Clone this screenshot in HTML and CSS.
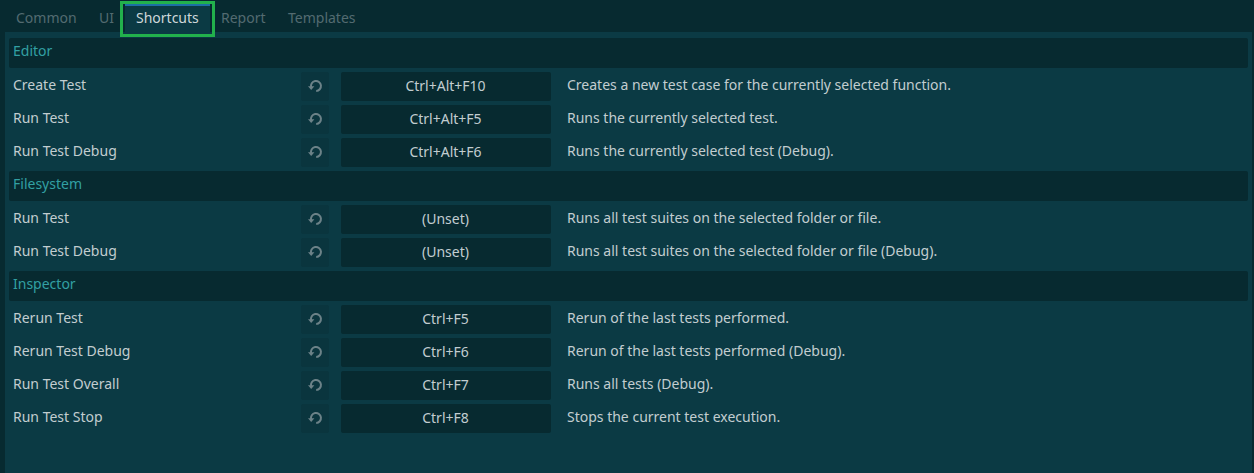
FILE: index.html
```
<!DOCTYPE html>
<html lang="en">
<head>
<meta charset="utf-8">
<title>Shortcuts</title>
<link rel="stylesheet" href="styles.css">
</head>
<body>
<svg class="defs" width="0" height="0"><symbol id="reset" viewBox="0 0 16 16"><path d="M3.1 9.2A5 5 0 1 1 8.2 13" fill="none" stroke="currentColor" stroke-width="2"/><path d="M0 8.2h6.4L3.2 12z" fill="currentColor"/></symbol></svg>
<nav class="tabs">
  <span class="tab common">Common</span><span class="tab ui">UI</span><span class="tab active">Shortcuts<i class="marker"></i></span><span class="tab report">Report</span><span class="tab">Templates</span>
</nav>
<main class="panel">
  <h2 class="section">Editor</h2>
  <div class="row"><span class="name">Create Test</span><span class="reset"><svg><use href="#reset"/></svg></span><span class="key">Ctrl+Alt+F10</span><span class="desc">Creates a new test case for the currently selected function.</span></div>
  <div class="row"><span class="name">Run Test</span><span class="reset"><svg><use href="#reset"/></svg></span><span class="key">Ctrl+Alt+F5</span><span class="desc">Runs the currently selected test.</span></div>
  <div class="row"><span class="name">Run Test Debug</span><span class="reset"><svg><use href="#reset"/></svg></span><span class="key">Ctrl+Alt+F6</span><span class="desc">Runs the currently selected test (Debug).</span></div>
  <h2 class="section">Filesystem</h2>
  <div class="row"><span class="name">Run Test</span><span class="reset"><svg><use href="#reset"/></svg></span><span class="key">(Unset)</span><span class="desc">Runs all test suites on the selected folder or file.</span></div>
  <div class="row"><span class="name">Run Test Debug</span><span class="reset"><svg><use href="#reset"/></svg></span><span class="key">(Unset)</span><span class="desc">Runs all test suites on the selected folder or file (Debug).</span></div>
  <h2 class="section">Inspector</h2>
  <div class="row"><span class="name">Rerun Test</span><span class="reset"><svg><use href="#reset"/></svg></span><span class="key">Ctrl+F5</span><span class="desc">Rerun of the last tests performed.</span></div>
  <div class="row"><span class="name">Rerun Test Debug</span><span class="reset"><svg><use href="#reset"/></svg></span><span class="key">Ctrl+F6</span><span class="desc">Rerun of the last tests performed (Debug).</span></div>
  <div class="row"><span class="name">Run Test Overall</span><span class="reset"><svg><use href="#reset"/></svg></span><span class="key">Ctrl+F7</span><span class="desc">Runs all tests (Debug).</span></div>
  <div class="row"><span class="name">Run Test Stop</span><span class="reset"><svg><use href="#reset"/></svg></span><span class="key">Ctrl+F8</span><span class="desc">Stops the current test execution.</span></div>
</main>
</body>
</html>
```
FILE: styles.css
```
* { box-sizing: border-box; }
body {
  margin: 0;
  height: 473px;
  display: flex;
  flex-direction: column;
  overflow: hidden;
  background: #072a30;
  color: #c2cdd0;
  font: 14px/20px "Noto Sans", sans-serif;
  white-space: nowrap;
}
.defs { position: absolute; }
.tabs {
  display: flex;
  height: 32px;
  flex: none;
  padding-left: 5px;
  color: #536b70;
}
.tab { padding: 8px 11px 0; }
.common { width: 83px; }
.ui { width: 37px; }
.report { width: 67px; }
.active {
  position: relative;
  width: 85px;
  margin-top: 4px;
  padding-top: 4px;
  background: #0b3a44;
  box-shadow: inset 0 2px #1d6fa5;
  color: #ced8da;
}
/* Highlight frame drawn over the selected tab */
.marker {
  position: absolute;
  left: -5px;
  top: -3px;
  width: 95px;
  height: 36px;
  border: 3px solid #22b14c;
}
.panel {
  flex: 1;
  display: flex;
  flex-direction: column;
  gap: 4px;
  margin: 0 2px 0 5px;
  padding: 6px 4px;
  background: #0b3a44;
}
.section {
  flex: none;
  height: 30px;
  margin: 0;
  padding: 3px 4px;
  border-radius: 2px;
  background: #072a30;
  color: #32a0a3;
  font: inherit;
}
.row {
  display: grid;
  grid-template-columns: 276px 28px 210px 1fr;
  column-gap: 12px;
  height: 29px;
  padding-left: 4px;
}
.name { padding-top: 3px; }
.desc { padding: 3px 0 0 4px; }
.reset, .key {
  display: flex;
  justify-content: center;
  border-radius: 2px;
}
.reset {
  padding: 6px 0 0 2px;
  background: #0a353e;
  color: #6c8288;
}
.reset svg { width: 16px; height: 16px; }
.key {
  padding: 4px 1px 0 0;
  background: #072a30;
}
```
